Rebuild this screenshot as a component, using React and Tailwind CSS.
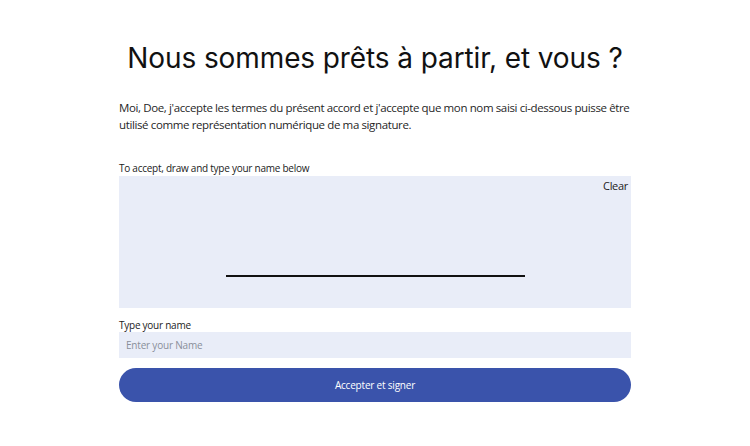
export default function App() {
  return (
    <div className="w-[750px] h-[446px] bg-white flex flex-col items-center" style={{ fontFamily: '"Open Sans", sans-serif' }}>
      <div className="w-[512px] flex flex-col">
        <h1 className="mt-[38px] text-center whitespace-nowrap text-[28px] leading-[40px] text-[#111] tracking-[-0.1px]" style={{ fontFamily: 'Inter, "Noto Sans", sans-serif' }}>
          Nous sommes prêts à partir, et vous ?
        </h1>
        <p className="mt-[21px] text-[11.5px] leading-[17px] text-[#1f1f1f] tracking-[-0.38px] whitespace-nowrap">
          Moi, Doe, j'accepte les termes du présent accord et j'accepte que mon nom saisi ci-dessous puisse être
          <br />
          utilisé comme représentation numérique de ma signature.
        </p>
        <div className="mt-[28px] text-[10px] leading-[14px] text-[#222] tracking-[-0.25px]">To accept, draw and type your name below</div>
        <div className="mt-[1px] h-[132px] bg-[#e9edf8] flex flex-col">
          <div className="flex justify-end pr-[3px] pt-[2px]">
            <span className="text-[11px] leading-[16px] text-[#222] tracking-[-0.3px]">Clear</span>
          </div>
          <div className="mt-[81px] flex justify-center">
            <div className="w-[299px] h-[2px] bg-[#111]"></div>
          </div>
        </div>
        <div className="mt-[10px] text-[10px] leading-[14px] text-[#222] tracking-[-0.25px]">Type your name</div>
        <div className="h-[26px] bg-[#e9edf8] flex items-center px-[7px]">
          <span className="text-[10px] text-[#8a8f9a] tracking-[-0.2px]">Enter your Name</span>
        </div>
        <button className="mt-[10px] h-[34px] rounded-full bg-[#3a53ab] text-white text-[10px] tracking-[-0.2px] flex items-center justify-center">
          Accepter et signer
        </button>
      </div>
    </div>
  );
}
